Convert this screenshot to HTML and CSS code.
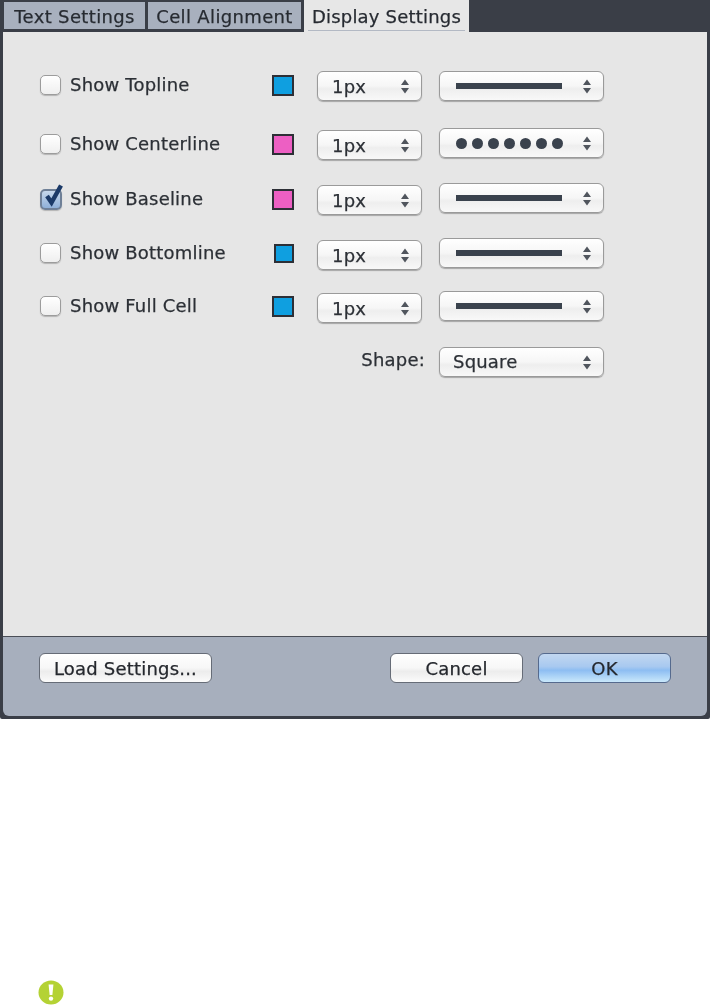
FILE: index.html
```html
<!DOCTYPE html>
<html lang="en">
<head>
    <meta charset="UTF-8">
    <meta name="viewport" content="width=device-width, initial-scale=1.0">
    <title>Display Settings</title>
    <link rel="stylesheet" href="styles.css">
</head>
<body>

    <svg class="defs" width="0" height="0">
        <symbol id="arrows" viewBox="0 0 10 15">
            <path d="M5 0.5 9 6H1Z M5 14.5 1 9H9Z" fill="#50555d"/>
        </symbol>
    </svg>

    <div class="window">
        <div class="tabs">
            <div class="tab tab-first">Text Settings</div>
            <div class="tab tab-second">Cell Alignment</div>
            <div class="tab tab-active"><span>Display Settings</span></div>
        </div>

        <div class="panel">
            <div class="rows">
                <div class="row row-up">
                    <div class="check"><span class="box"></span>Show Topline</div>
                    <span class="swatch blue"></span>
                    <div class="select size">1px<svg class="arrows"><use href="#arrows"/></svg></div>
                    <div class="select line"><span class="stroke"></span><svg class="arrows"><use href="#arrows"/></svg></div>
                </div>
                <div class="row row-down">
                    <div class="check"><span class="box"></span>Show Centerline</div>
                    <span class="swatch pink"></span>
                    <div class="select size">1px<svg class="arrows"><use href="#arrows"/></svg></div>
                    <div class="select line">
                        <span class="dots"><i></i><i></i><i></i><i></i><i></i><i></i><i></i></span>
                        <svg class="arrows"><use href="#arrows"/></svg>
                    </div>
                </div>
                <div class="row row-down">
                    <div class="check">
                        <span class="box checked">
                            <svg class="tick" viewBox="0 0 24 26"><path d="M7 14 11.5 20.5 21 3.5" fill="none" stroke="#1b3a68" stroke-width="4.4"/></svg>
                        </span>Show Baseline
                    </div>
                    <span class="swatch pink"></span>
                    <div class="select size">1px<svg class="arrows"><use href="#arrows"/></svg></div>
                    <div class="select line"><span class="stroke"></span><svg class="arrows"><use href="#arrows"/></svg></div>
                </div>
                <div class="row">
                    <div class="check"><span class="box"></span>Show Bottomline</div>
                    <span class="swatch blue swatch-small"></span>
                    <div class="select size">1px<svg class="arrows"><use href="#arrows"/></svg></div>
                    <div class="select line"><span class="stroke"></span><svg class="arrows"><use href="#arrows"/></svg></div>
                </div>
                <div class="row">
                    <div class="check"><span class="box"></span>Show Full Cell</div>
                    <span class="swatch blue"></span>
                    <div class="select size">1px<svg class="arrows"><use href="#arrows"/></svg></div>
                    <div class="select line"><span class="stroke"></span><svg class="arrows"><use href="#arrows"/></svg></div>
                </div>
                <div class="row row-shape">
                    <div class="shape-label">Shape:</div>
                    <div class="select line">Square<svg class="arrows"><use href="#arrows"/></svg></div>
                </div>
            </div>
        </div>

        <div class="footer">
            <button class="btn btn-load">Load Settings...</button>
            <div class="footer-right">
                <button class="btn">Cancel</button>
                <button class="btn btn-ok">OK</button>
            </div>
        </div>
    </div>

    <div class="notice">
        <svg width="26" height="25" viewBox="0 0 26 25">
            <ellipse cx="13" cy="12.5" rx="12.5" ry="12" fill="#b4d234"/>
            <path d="M10.6 4.5h4.8l-1 10.5h-2.8Z" fill="#fff"/>
            <circle cx="13" cy="18.6" r="2.2" fill="#fff"/>
        </svg>
    </div>

</body>
</html>
```

FILE: styles.css
```css
body {
    margin: 0;
    background-color: #fff;
    font-family: "DejaVu Sans", sans-serif;
    font-size: 18px;
    letter-spacing: 0.2px;
    color: #2c3036;
    -webkit-text-stroke: 0.25px #2c3036;
}
.defs {
    position: absolute;
}
.window {
    height: 719px;
    padding: 0 3px 3px;
    box-sizing: border-box;
    display: flex;
    flex-direction: column;
    background-color: #3a3e47;
    border-radius: 0 0 2px 2px;
    filter: blur(0.5px);
}

/* Tabs */
.tabs {
    height: 32px;
    display: flex;
    align-items: flex-start;
    flex-shrink: 0;
    letter-spacing: 0.35px;
}
.tab {
    height: 27px;
    margin-top: 2px;
    line-height: 30px;
    background-color: #a8b0be;
    text-align: center;
    white-space: nowrap;
    color: #262a31;
}
.tab-first {
    width: 141px;
    margin-left: 1px;
}
.tab-second {
    width: 153px;
    margin-left: 3px;
}
.tab-active {
    width: 165px;
    height: 32px;
    margin-top: 0;
    margin-left: 3px;
    padding: 1px 4px 0;
    box-sizing: border-box;
    letter-spacing: 0.2px;
    background-color: #e7e7e7;
}
.tab-active span {
    display: block;
    height: 29px;
    line-height: 31px;
    border-bottom: 1px solid #b3b9c4;
}

/* Settings panel */
.panel {
    height: 604px;
    padding: 39px 0 0 37px;
    box-sizing: border-box;
    flex-shrink: 0;
    background-color: #e6e6e6;
}
.rows {
    display: grid;
    grid-template-rows: 57px 55px 55px 53px 56px 30px;
}
.row {
    height: 30px;
    display: grid;
    grid-template-columns: 232px 45px 122px 165px;
    align-items: center;
}
.check {
    display: flex;
    align-items: center;
    gap: 9px;
    height: 30px;
    margin-top: -4px;
}
.box {
    position: relative;
    width: 21px;
    height: 20px;
    margin-top: 2px;
    box-sizing: border-box;
    border: 1px solid #9c9c9c;
    border-radius: 5px;
    background: linear-gradient(#fff, #efefef);
    box-shadow: 0 1px 1px rgba(0, 0, 0, 0.22);
}
.box.checked {
    width: 22px;
    height: 21px;
    margin-right: -1px;
    border: 2px solid #6f8097;
    background: linear-gradient(#c6d8ec, #8fb0d8);
}
.tick {
    position: absolute;
    left: -2px;
    top: -9px;
    width: 24px;
    height: 26px;
}
.swatch {
    width: 22px;
    height: 21px;
    margin-top: -2px;
    box-sizing: border-box;
    border: 2px solid #2d2f36;
}
.swatch-small {
    width: 20px;
    height: 19px;
    margin-left: 2px;
}
.row-down .check {
    margin-top: -2px;
}
.row-down .swatch {
    margin-top: 0;
}
.blue {
    background-color: #0f9fe0;
}
.pink {
    background-color: #ed5fc3;
}

/* Popup selects */
.select {
    position: relative;
    height: 30px;
    box-sizing: border-box;
    padding-left: 13px;
    line-height: 28px;
    border: 1px solid #9a9a9a;
    border-radius: 6px;
    background: linear-gradient(#fff 0%, #f6f6f6 50%, #eeeeee 60%, #f8f8f8 100%);
    box-shadow: 0 1px 1px rgba(0, 0, 0, 0.28);
}
.size {
    width: 105px;
    align-self: start;
    margin-top: 2px;
    padding-left: 14px;
    line-height: 30px;
}
.row-up .size {
    margin-top: 0;
}
.line {
    width: 165px;
    align-self: start;
}
.arrows {
    position: absolute;
    right: 11px;
    top: 7px;
    width: 10px;
    height: 15px;
}
.stroke {
    display: block;
    width: 106px;
    height: 6px;
    margin: 11px 0 0 3px;
    background-color: #3a424d;
}
.dots {
    display: flex;
    justify-content: space-between;
    width: 107px;
    margin: 9px 0 0 3px;
}
.dots i {
    width: 11px;
    height: 11px;
    border-radius: 50%;
    background-color: #3a424d;
}
.row-shape {
    grid-template-columns: 399px 165px;
}
.shape-label {
    text-align: right;
    padding-right: 14px;
    margin-top: -5px;
}

/* Bottom bar */
.footer {
    flex: 1;
    display: flex;
    justify-content: space-between;
    padding: 16px 36px 0;
    border-top: 1px solid #4a4e57;
    background-color: #a7afbd;
    border-radius: 0 0 6px 6px;
}
.footer-right {
    display: flex;
    gap: 15px;
}
.btn {
    width: 133px;
    height: 30px;
    padding: 0;
    font-family: inherit;
    font-size: 18px;
    letter-spacing: 0.2px;
    color: #25282e;
    -webkit-text-stroke: 0.25px #25282e;
    border: 1px solid #666c77;
    border-radius: 6px;
    background: linear-gradient(#fff 0%, #f7f7f7 50%, #ececec 62%, #fbfbfb 100%);
}
.btn-load {
    width: 173px;
}
.btn-ok {
    border-color: #556a8e;
    background: linear-gradient(#c2d7f0 0%, #a8c9f0 45%, #8dbdf2 58%, #c9e8fb 100%);
}

.notice {
    padding: 261px 0 0 38px;
    line-height: 0;
}
```
